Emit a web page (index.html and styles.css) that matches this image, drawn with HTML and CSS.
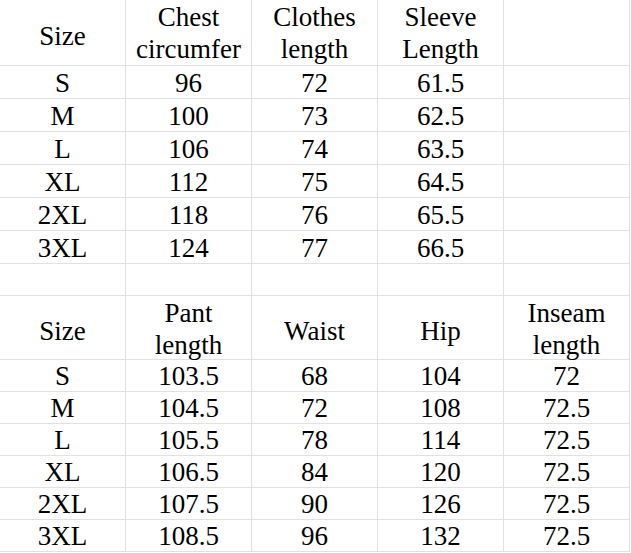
FILE: index.html
```html
<!DOCTYPE html>
<html>
<head>
<meta charset="utf-8">
<link rel="stylesheet" href="styles.css">
</head>
<body>
<div class="sheet">
  <div class="row head">
    <div class="cell one">Size</div>
    <div class="cell">Chest<br>circumfer</div>
    <div class="cell">Clothes<br>length</div>
    <div class="cell">Sleeve<br>Length</div>
    <div class="cell"></div>
  </div>
  <div class="row top"><div class="cell">S</div><div class="cell">96</div><div class="cell">72</div><div class="cell">61.5</div><div class="cell"></div></div>
  <div class="row top"><div class="cell">M</div><div class="cell">100</div><div class="cell">73</div><div class="cell">62.5</div><div class="cell"></div></div>
  <div class="row top"><div class="cell">L</div><div class="cell">106</div><div class="cell">74</div><div class="cell">63.5</div><div class="cell"></div></div>
  <div class="row top"><div class="cell">XL</div><div class="cell">112</div><div class="cell">75</div><div class="cell">64.5</div><div class="cell"></div></div>
  <div class="row top"><div class="cell">2XL</div><div class="cell">118</div><div class="cell">76</div><div class="cell">65.5</div><div class="cell"></div></div>
  <div class="row top"><div class="cell">3XL</div><div class="cell">124</div><div class="cell">77</div><div class="cell">66.5</div><div class="cell"></div></div>
  <div class="row gap"><div class="cell"></div><div class="cell"></div><div class="cell"></div><div class="cell"></div><div class="cell"></div></div>
  <div class="row head2">
    <div class="cell one">Size</div>
    <div class="cell">Pant<br>length</div>
    <div class="cell one">Waist</div>
    <div class="cell one">Hip</div>
    <div class="cell">Inseam<br>length</div>
  </div>
  <div class="row bot"><div class="cell">S</div><div class="cell">103.5</div><div class="cell">68</div><div class="cell">104</div><div class="cell">72</div></div>
  <div class="row bot"><div class="cell">M</div><div class="cell">104.5</div><div class="cell">72</div><div class="cell">108</div><div class="cell">72.5</div></div>
  <div class="row bot"><div class="cell">L</div><div class="cell">105.5</div><div class="cell">78</div><div class="cell">114</div><div class="cell">72.5</div></div>
  <div class="row bot"><div class="cell">XL</div><div class="cell">106.5</div><div class="cell">84</div><div class="cell">120</div><div class="cell">72.5</div></div>
  <div class="row bot"><div class="cell">2XL</div><div class="cell">107.5</div><div class="cell">90</div><div class="cell">126</div><div class="cell">72.5</div></div>
  <div class="row bot"><div class="cell">3XL</div><div class="cell">108.5</div><div class="cell">96</div><div class="cell">132</div><div class="cell">72.5</div></div>
</div>
</body>
</html>
```
FILE: styles.css
```css
html, body {
  margin: 0;
  padding: 0;
  background: #ffffff;
}
.sheet {
  width: 630px;
  font-family: "Liberation Serif", serif;
  font-size: 27px;
  color: #000000;
}
.row {
  display: grid;
  grid-template-columns: repeat(5, 126px);
}
.cell {
  box-sizing: border-box;
  border-right: 1px solid #e1e1e1;
  border-bottom: 1px solid #e1e1e1;
  display: flex;
  align-items: center;
  justify-content: center;
  text-align: center;
  line-height: 31px;
  white-space: nowrap;
  padding-top: 2px;
}
.head .cell,
.head2 .cell {
  line-height: 32px;
  padding-top: 1px;
}
.head2 .cell {
  padding-top: 2px;
}
.head .cell.one,
.head2 .cell.one {
  padding-top: 7px;
}
.head .cell { height: 66px; }
.top .cell { height: 33px; }
.gap .cell { height: 32px; }
.head2 .cell { height: 64px; }
.bot .cell { height: 32px; }
```
